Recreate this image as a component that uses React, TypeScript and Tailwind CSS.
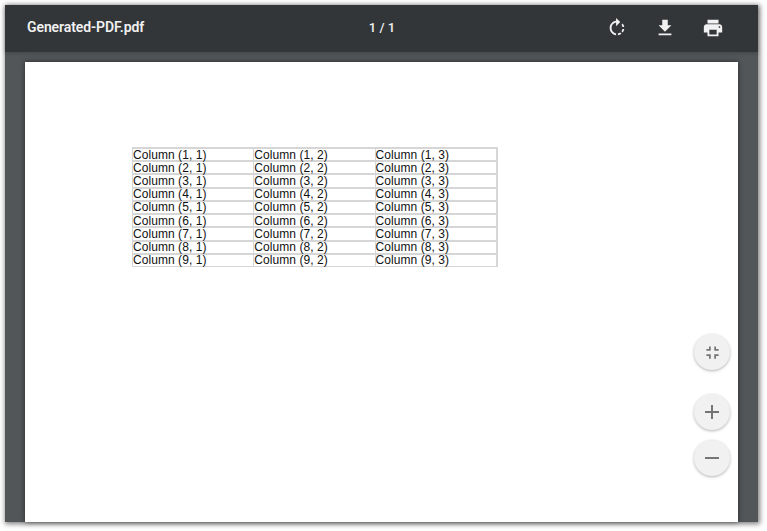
import React from 'react';

const rows = [1, 2, 3, 4, 5, 6, 7, 8, 9];
const cols = [1, 2, 3];

function Icon({ d, className }: { d: string; className: string }) {
  return (
    <svg viewBox="0 0 24 24" className={className} fill="currentColor">
      <path d={d} />
    </svg>
  );
}

const toolbarIcons = [
  'M15.55 5.55L11 1v3.07C7.06 4.56 4 7.92 4 12s3.05 7.44 7 7.93v-2.02c-2.84-.48-5-2.94-5-5.91s2.16-5.43 5-5.91V10l4.55-4.45zM19.93 11c-.17-1.39-.72-2.73-1.62-3.89l-1.42 1.42c.54.75.88 1.6 1.02 2.47h2.02zM13 17.9v2.02c1.39-.17 2.74-.71 3.9-1.61l-1.44-1.44c-.75.54-1.59.89-2.46 1.03zm3.89-2.42l1.42 1.41c.9-1.16 1.45-2.5 1.62-3.89h-2.02c-.14.87-.48 1.72-1.02 2.48z',
  'M19 9h-4V3H9v6H5l7 7 7-7zM5 18v2h14v-2H5z',
  'M19 8H5c-1.66 0-3 1.34-3 3v6h4v4h12v-4h4v-6c0-1.66-1.34-3-3-3zm-3 11H8v-5h8v5zm3-7c-.55 0-1-.45-1-1s.45-1 1-1 1 .45 1 1-.45 1-1 1zm-1-9H6v4h12V3z',
];

function Fab({ d, iconClass, className }: { d: string; iconClass: string; className?: string }) {
  return (
    <button
      type="button"
      className={`flex size-9 items-center justify-center rounded-full bg-[#f1f1f1] text-[#757575] shadow-[0_1px_3px_rgba(0,0,0,0.3)] ${className ?? ''}`}
    >
      <Icon d={d} className={iconClass} />
    </button>
  );
}

export default function App() {
  return (
    <div className="h-[531px] w-[767px] overflow-hidden bg-white pl-[5px] pt-[5px] font-['Roboto',sans-serif]">
      <div className="relative flex h-[517px] w-[753px] flex-col shadow-[1px_1px_5px_1px_rgba(0,0,0,0.5)]">
        <header className="z-10 flex h-[47px] shrink-0 items-center bg-[#323639] pb-0.5 pl-[22px] pr-[21px] text-[#f1f1f1] shadow-[0_1px_4px_rgba(0,0,0,0.2)]">
          <div className="flex-1 text-[14px] font-semibold tracking-[-0.1px]">Generated-PDF.pdf</div>
          <div className="text-[13px] font-medium">1 / 1</div>
          <div className="flex flex-1 justify-end">
            {toolbarIcons.map((d) => (
              <span key={d} className="flex w-12 justify-center">
                <Icon d={d} className="size-[22px]" />
              </span>
            ))}
          </div>
        </header>

        <main className="flex min-h-0 flex-1 bg-[#525659] px-5 pt-2.5">
          <div className="h-full w-[713px] bg-white pl-[107px] pt-[85px] shadow-[0_0_5px_rgba(0,0,0,0.5)]">
            <div className="w-[366px] border-b border-r-2 border-[#d6d6d6] font-['Liberation_Sans',Arial,sans-serif] text-[12px] tracking-[0.06px] text-[#111]">
              {rows.map((r) => (
                <div key={r} className="flex h-[13.22px] items-center border-t-2 border-[#d6d6d6]">
                  {cols.map((c) => (
                    <div key={c} className="flex h-full w-[121.3px] items-center whitespace-nowrap border-l border-[#d6d6d6] leading-none">
                      Column ({r}, {c})
                    </div>
                  ))}
                </div>
              ))}
            </div>
          </div>
        </main>

        <div className="absolute bottom-[46px] right-[28px] flex flex-col">
          <Fab d="M5 16h3v3h2v-5H5v2zm3-8H5v2h5V5H8v3zm6 11h2v-3h3v-2h-5v5zm2-11V5h-2v5h5V8h-3z" iconClass="size-[21px]" className="mb-6" />
          <Fab d="M19 13h-6v6h-2v-6H5v-2h6V5h2v6h6v2z" iconClass="size-6" className="mb-2.5" />
          <Fab d="M19 13H5v-2h14v2z" iconClass="size-6" />
        </div>
      </div>
    </div>
  );
}
